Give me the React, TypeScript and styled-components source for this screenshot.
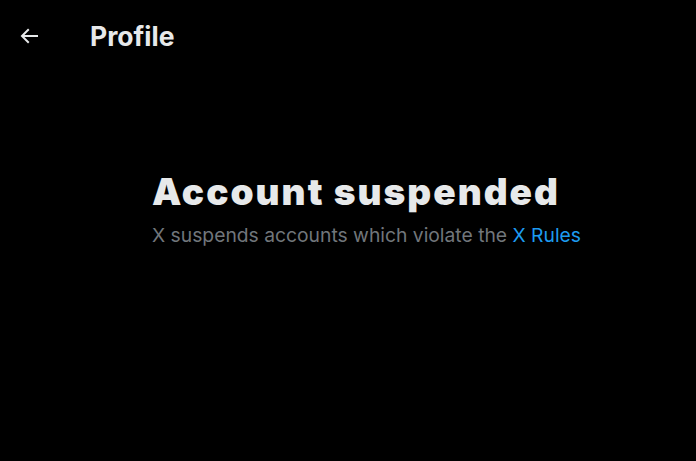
import styled, { createGlobalStyle } from "styled-components";

const Global = createGlobalStyle`
  html, body {
    margin: 0;
    padding: 0;
    background: #000;
  }
  body {
    font-family: Inter, "Liberation Sans", Arial, sans-serif;
    color: #e7e9ea;
  }
`;

const Page = styled.div`
  width: 696px;
  height: 461px;
  background: #000;
  display: flex;
  flex-direction: column;
  overflow: hidden;
`;

const Header = styled.header`
  height: 72px;
  display: flex;
  align-items: center;
  padding: 0 0 0 17px;
  box-sizing: border-box;
`;

const BackButton = styled.button`
  width: 24px;
  height: 24px;
  padding: 0;
  border: none;
  background: none;
  color: #e7e9ea;
  display: flex;
  align-items: center;
  justify-content: center;
  margin-right: 49px;
  cursor: pointer;
`;

const Title = styled.h2`
  margin: 0;
  font-size: 26.5px;
  font-weight: 700;
  color: #e7e9ea;
`;

const Empty = styled.div`
  width: 392px;
  margin: 98px auto 0;
  display: flex;
  flex-direction: column;
`;

const Heading = styled.h1`
  margin: 0;
  font-size: 37px;
  font-weight: 900;
  line-height: 44px;
  letter-spacing: 2px;
  color: #e7e9ea;
  white-space: nowrap;
`;

const Sub = styled.p`
  margin: 9px 0 0;
  font-size: 19.3px;
  line-height: 24px;
  color: #71767b;
  white-space: nowrap;
`;

const RulesLink = styled.a`
  color: #1d9bf0;
  text-decoration: none;
`;

export default function App() {
  return (
    <Page>
      <Global />
      <Header>
        <BackButton aria-label="Back">
          <svg viewBox="0 0 24 24" width="24" height="24" fill="currentColor">
            <path d="M7.414 13l5.043 5.04-1.414 1.42L3.586 12l7.457-7.46 1.414 1.42L7.414 11H21v2H7.414z" />
          </svg>
        </BackButton>
        <Title>Profile</Title>
      </Header>
      <Empty>
        <Heading>Account suspended</Heading>
        <Sub>
          X suspends accounts which violate the <RulesLink href="#">X Rules</RulesLink>
        </Sub>
      </Empty>
    </Page>
  );
}
